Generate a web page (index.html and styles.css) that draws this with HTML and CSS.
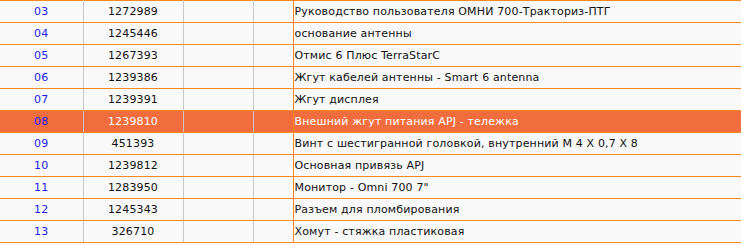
FILE: index.html
```html
<!DOCTYPE html>
<html lang="ru">
<head>
<meta charset="utf-8">
<link rel="stylesheet" href="styles.css">
</head>
<body>
<table class="parts">
  <colgroup>
    <col class="c-num"><col class="c-code"><col class="c-a"><col class="c-b"><col class="c-name">
  </colgroup>
  <tbody>
    <tr><td class="num">03</td><td class="code">1272989</td><td class="g"></td><td class="g2"></td><td class="name">Руководство пользователя ОМНИ 700-Тракториз-ПТГ</td></tr>
    <tr><td class="num">04</td><td class="code">1245446</td><td class="g"></td><td class="g2"></td><td class="name">основание антенны</td></tr>
    <tr><td class="num">05</td><td class="code">1267393</td><td class="g"></td><td class="g2"></td><td class="name">Отмис 6 Плюс TerraStarC</td></tr>
    <tr><td class="num">06</td><td class="code">1239386</td><td class="g"></td><td class="g2"></td><td class="name">Жгут кабелей антенны - Smart 6 antenna</td></tr>
    <tr><td class="num">07</td><td class="code">1239391</td><td class="g"></td><td class="g2"></td><td class="name">Жгут дисплея</td></tr>
    <tr class="active"><td class="num">08</td><td class="code">1239810</td><td class="g"></td><td class="g2"></td><td class="name">Внешний жгут питания APJ - тележка</td></tr>
    <tr><td class="num">09</td><td class="code">451393</td><td class="g"></td><td class="g2"></td><td class="name">Винт с шестигранной головкой, внутренний M 4 X 0,7 X 8</td></tr>
    <tr><td class="num">10</td><td class="code">1239812</td><td class="g"></td><td class="g2"></td><td class="name">Основная привязь APJ</td></tr>
    <tr><td class="num">11</td><td class="code">1283950</td><td class="g"></td><td class="g2"></td><td class="name">Монитор - Omni 700 7"</td></tr>
    <tr><td class="num">12</td><td class="code">1245343</td><td class="g"></td><td class="g2"></td><td class="name">Разъем для пломбирования</td></tr>
    <tr><td class="num">13</td><td class="code">326710</td><td class="g"></td><td class="g2"></td><td class="name">Хомут - стяжка пластиковая</td></tr>
  </tbody>
</table>
</body>
</html>
```

FILE: styles.css
```css
html, body {
  margin: 0;
  padding: 0;
  background: #f9f9f9;
}
body {
  font-family: "DejaVu Sans", Verdana, sans-serif;
  font-size: 11px;
  letter-spacing: 0.15px;
  color: #111;
}
.parts {
  width: 741px;
  border-collapse: collapse;
  table-layout: fixed;
  background: #f9f9f9;
}
.c-num { width: 83px; }
.c-code { width: 100px; }
.c-a { width: 70px; }
.c-b { width: 40px; }
.parts td {
  height: 21px;
  padding: 0 3px;
  border-top: 1px solid #f7891f;
  border-bottom: 1px solid #f7891f;
  white-space: nowrap;
  line-height: 21px;
  box-sizing: border-box;
}
.parts td.num, .parts td.code, .parts td.g {
  border-right: 1px solid #c8c8c8;
}
.parts td.g2 {
  border-right: 1px solid #f7891f;
}
.num {
  text-align: center;
  color: #1c1cf2;
}
.code {
  text-align: center;
}
.parts td.name {
  text-align: left;
  padding-left: 1px;
}
.active td {
  background: #f26d3d;
  color: #fff;
}
.active td.num {
  color: #1c1cf2;
}
```
